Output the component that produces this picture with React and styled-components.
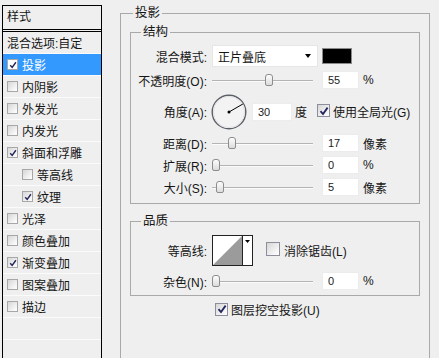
import React from "react";
import styled, { createGlobalStyle } from "styled-components";

const GlobalStyle = createGlobalStyle`
  html, body {
    margin: 0;
    padding: 0;
    background: #efefef;
    overflow: hidden;
  }
  body {
    font-family: "Liberation Sans", "Noto Sans CJK SC", sans-serif;
    font-size: 12px;
    color: #151515;
  }
`;

const Page = styled.div`
  display: flex;
  align-items: flex-start;
  width: 439px;
  height: 358px;
  overflow: hidden;
`;

/* ---------- left: style list ---------- */

const StylePanel = styled.div`
  flex-shrink: 0;
  width: 98px;
  height: 400px;
  margin: 5px 0 0 2px;
  border: 1px solid #000;
`;

const PanelHeader = styled.div`
  height: 23px;
  line-height: 23px;
  padding-left: 4px;
  border-bottom: 3px double #000;
`;

const StyleItem = styled.div`
  display: flex;
  align-items: center;
  gap: 4px;
  height: 21px;
  padding-left: ${(p) => (p.$indent ? 19 : 4)}px;
  border-bottom: 1px solid #fbfbfb;
  background: ${(p) => (p.$active ? "#3399ff" : "transparent")};
  color: ${(p) => (p.$active ? "#fff" : "#151515")};
  white-space: nowrap;
`;

/* ---------- checkbox ---------- */

const Box = styled.span`
  flex-shrink: 0;
  display: inline-flex;
  align-items: center;
  justify-content: center;
  box-sizing: border-box;
  width: ${(p) => p.$size}px;
  height: ${(p) => p.$size}px;
  border: 1px solid ${(p) => (p.$light ? "#a7a7a7" : "#8c8e9c")};
  background: ${(p) =>
    p.$white ? "#fff" : "linear-gradient(135deg, #d6d6d6 0%, #f4f4f4 70%, #fff 100%)"};
`;

const Check = ({ size = 11, checked, light, white }) => (
  <Box $size={size} $light={light} $white={white}>
    {checked && (
      <svg width={size - 3} height={size - 3} viewBox="0 0 10 10">
        <path d="M1.5 5.2 L4 8 L8.6 1.6" fill="none" stroke="#26265e" strokeWidth="1.8" />
      </svg>
    )}
  </Box>
);

/* ---------- right: groups ---------- */

const Settings = styled.div`
  flex-shrink: 0;
  margin: 6px 0 0 18px;
  width: 310px;
`;

const Group = styled.fieldset`
  margin: ${(p) => p.$mt || 0}px 0 0 0;
  padding: ${(p) => p.$pad};
  border: 1px solid #a9a9a9;
  min-width: 0;
  min-height: ${(p) => p.$minH || 0}px;
`;

const GroupTitle = styled.legend`
  margin-left: ${(p) => p.$indent}px;
  padding: 0 2px;
  line-height: 14px;
  font-size: 12.5px;
`;

const Rows = styled.div`
  display: flex;
  flex-direction: column;
  gap: ${(p) => p.$gap}px;
`;

const Row = styled.div`
  display: flex;
  align-items: center;
  height: ${(p) => p.$h}px;
  margin-top: ${(p) => p.$mt || 0}px;
  padding-left: ${(p) => p.$pl || 0}px;
  white-space: nowrap;
`;

const Label = styled.span`
  width: 76px;
  margin-right: 5px;
  text-align: right;
`;

const Unit = styled.span`
  margin-left: ${(p) => p.$ml ?? 4}px;
`;

const Select = styled.div`
  box-sizing: border-box;
  display: flex;
  align-items: center;
  justify-content: space-between;
  width: 106px;
  height: 22px;
  padding: 0 6px 0 5px;
  background: #fff;
  border: 1px solid #e6e6e6;
`;

const Arrow = styled.span`
  width: 0;
  height: 0;
  border-left: 3.5px solid transparent;
  border-right: 3.5px solid transparent;
  border-top: 4px solid #000;
`;

const Swatch = styled.span`
  box-sizing: border-box;
  width: 30px;
  height: 16px;
  margin-left: 4px;
  background: #000;
  border: 1px solid #8a8a8a;
`;

const Field = styled.span`
  box-sizing: border-box;
  display: flex;
  align-items: center;
  width: ${(p) => p.$w || 37}px;
  height: 18px;
  margin-left: ${(p) => p.$ml ?? 9}px;
  padding-left: 5px;
  background: #fff;
  border: 1px solid #ececec;
  font-size: 11px;
  color: #222;
`;

const Track = styled.div`
  position: relative;
  width: 101px;
  height: 18px;
  &::before {
    content: "";
    position: absolute;
    left: 0;
    right: 0;
    top: 9px;
    height: 1px;
    background: #b4b4b4;
    box-shadow: 0 1px 0 #fbfbfb;
  }
`;

const Thumb = styled.span`
  position: absolute;
  top: 3px;
  left: ${(p) => p.$x - 4}px;
  box-sizing: border-box;
  width: 8px;
  height: 12px;
  border: 1px solid #8d8d8d;
  border-radius: 3px 3px 2px 2px;
  background: linear-gradient(#fdfdfd, #dcdcdc);
`;

const Slider = ({ x }) => (
  <Track>
    <Thumb $x={x} />
  </Track>
);

const DialWrap = styled.span`
  display: inline-flex;
  margin-left: -1px;
`;

const Dial = ({ angle }) => {
  const r = (Math.PI / 180) * angle;
  const c = 18;
  const ex = c + 16 * Math.cos(r);
  const ey = c - 16 * Math.sin(r);
  return (
    <DialWrap>
      <svg width="36" height="36" viewBox="0 0 36 36">
        <circle cx={c} cy={c} r="16.8" fill="#f3f3f3" stroke="#5c6068" strokeWidth="1.4" />
        <circle cx={c} cy={c} r="15.6" fill="none" stroke="#e2e2e2" strokeWidth="1" />
        <line x1={c} y1={c} x2={ex} y2={ey} stroke="#000" strokeWidth="1" />
        <circle cx={c} cy={c} r="1.5" fill="#000" />
      </svg>
    </DialWrap>
  );
};

const ContourPicker = () => (
  <svg width="41" height="31" viewBox="0 0 41 31">
    <rect x="0.5" y="0.5" width="40" height="30" fill="#fff" stroke="#222" />
    <polygon points="1,30 30,1 30,30" fill="#9b9b9b" />
    <line x1="30.5" y1="0" x2="30.5" y2="31" stroke="#222" />
    <polygon points="33,5 38,5 35.5,8" fill="#000" />
  </svg>
);

const OptionText = styled.span`
  margin-left: ${(p) => p.$ml ?? 3}px;
`;

const styleList = [
  { name: "投影", check: true, active: true },
  { name: "内阴影" },
  { name: "外发光" },
  { name: "内发光" },
  { name: "斜面和浮雕", check: true },
  { name: "等高线", indent: true },
  { name: "纹理", check: true, indent: true },
  { name: "光泽" },
  { name: "颜色叠加" },
  { name: "渐变叠加", check: true },
  { name: "图案叠加" },
  { name: "描边" },
];

export default function App() {
  return (
    <Page>
      <GlobalStyle />
      <StylePanel>
        <PanelHeader>样式</PanelHeader>
        <StyleItem>混合选项:自定</StyleItem>
        {styleList.map((s) => (
          <StyleItem key={s.name} $active={s.active} $indent={s.indent}>
            <Check size={11} checked={s.check} light white={s.active} />
            {s.name}
          </StyleItem>
        ))}
        <StyleItem />
      </StylePanel>

      <Settings>
        <Group $pad="5px 9px 0 9px" $minH={420}>
          <GroupTitle $indent={3}>投影</GroupTitle>

          <Group $pad="6px 0 7px 0">
            <GroupTitle $indent={10}>结构</GroupTitle>
            <Rows $gap={4}>
              <Row $h={22}>
                <Label>混合模式:</Label>
                <Select>
                  正片叠底
                  <Arrow />
                </Select>
                <Swatch />
              </Row>
              <Row $h={18}>
                <Label>不透明度(O):</Label>
                <Slider x={57} />
                <Field>55</Field>
                <Unit>%</Unit>
              </Row>
              <Row $h={37}>
                <Label>角度(A):</Label>
                <Dial angle={30} />
                <Field $w={40} $ml={5}>30</Field>
                <Unit $ml={3}>度</Unit>
                <OptionText $ml={10}>
                  <Check size={13} checked />
                </OptionText>
                <OptionText>使用全局光(G)</OptionText>
              </Row>
              <Row $h={18}>
                <Label>距离(D):</Label>
                <Slider x={20} />
                <Field>17</Field>
                <Unit>像素</Unit>
              </Row>
              <Row $h={18}>
                <Label>扩展(R):</Label>
                <Slider x={4} />
                <Field>0</Field>
                <Unit>%</Unit>
              </Row>
              <Row $h={18}>
                <Label>大小(S):</Label>
                <Slider x={8} />
                <Field>5</Field>
                <Unit>像素</Unit>
              </Row>
            </Rows>
          </Group>

          <Group $mt={10} $pad="7px 0 5px 0">
            <GroupTitle $indent={10}>品质</GroupTitle>
            <Rows $gap={6}>
              <Row $h={31}>
                <Label>等高线:</Label>
                <ContourPicker />
                <OptionText $ml={13}>
                  <Check size={14} />
                </OptionText>
                <OptionText $ml={4}>消除锯齿(L)</OptionText>
              </Row>
              <Row $h={18}>
                <Label>杂色(N):</Label>
                <Slider x={4} />
                <Field>0</Field>
                <Unit>%</Unit>
              </Row>
            </Rows>
          </Group>

          <Row $h={14} $pl={85} $mt={6}>
            <Check size={13} checked />
            <OptionText>图层挖空投影(U)</OptionText>
          </Row>
        </Group>
      </Settings>
    </Page>
  );
}
